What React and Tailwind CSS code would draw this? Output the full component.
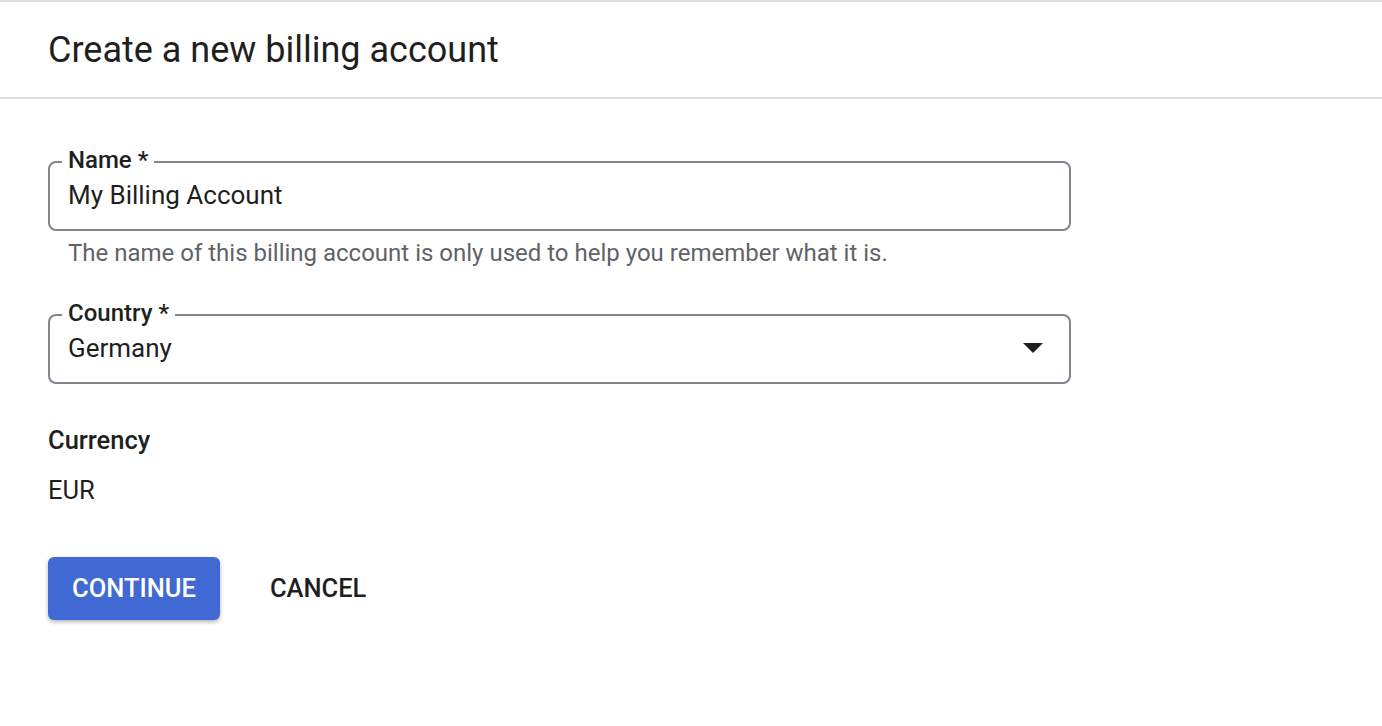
import React from 'react';

const Field = ({ label, children, helper }) => (
  <div>
    <div className="relative w-[1023px] h-[70px] border-2 border-[#80868b] rounded-[8px] flex items-center pl-[18px] pr-[26px]">
      <span className="absolute left-[12px] -top-[17px] bg-white px-[6px] text-[24px] leading-[28px] font-medium text-[#1f1f1f]">
        {label}
      </span>
      {children}
    </div>
    {helper && (
      <p className="pl-[20px] pt-[7px] text-[24px] leading-[30px] text-[#5f6368]">{helper}</p>
    )}
  </div>
);

export default function App() {
  return (
    <div className="min-h-screen bg-white font-['Roboto',sans-serif] text-[#1f1f1f]">
      <header className="border-t-2 border-b-2 border-[#dadce0] h-[99px] flex items-center px-[48px]">
        <h1 className="text-[36px] leading-[44px]">Create a new billing account</h1>
      </header>

      <main className="px-[48px] pt-[62px]">
        <Field
          label="Name *"
          helper="The name of this billing account is only used to help you remember what it is."
        >
          <span className="text-[26px] leading-[32px] -mt-[2px]">My Billing Account</span>
        </Field>

        <div className="mt-[46px]">
          <Field label="Country *">
            <span className="flex-1 text-[26px] leading-[32px] -mt-[2px]">Germany</span>
            <svg width="20" height="10" viewBox="0 0 20 10" className="-mt-[2px]">
              <path d="M0 0h20L10 10z" fill="currentColor" />
            </svg>
          </Field>
        </div>

        <div className="mt-[39px]">
          <h2 className="text-[25.5px] leading-[34px] font-medium">Currency</h2>
          <p className="mt-[16px] text-[25.5px] leading-[34px]">EUR</p>
        </div>

        <div className="mt-[50px] flex items-center gap-[28px]">
          <button className="h-[63px] px-[24px] rounded-[6px] bg-[#4169d3] text-white text-[25.5px] font-medium shadow-[0_2px_4px_rgba(0,0,0,0.3)]">
            CONTINUE
          </button>
          <button className="h-[63px] px-[22px] rounded-[6px] text-[25.5px] font-medium">
            CANCEL
          </button>
        </div>
      </main>
    </div>
  );
}
